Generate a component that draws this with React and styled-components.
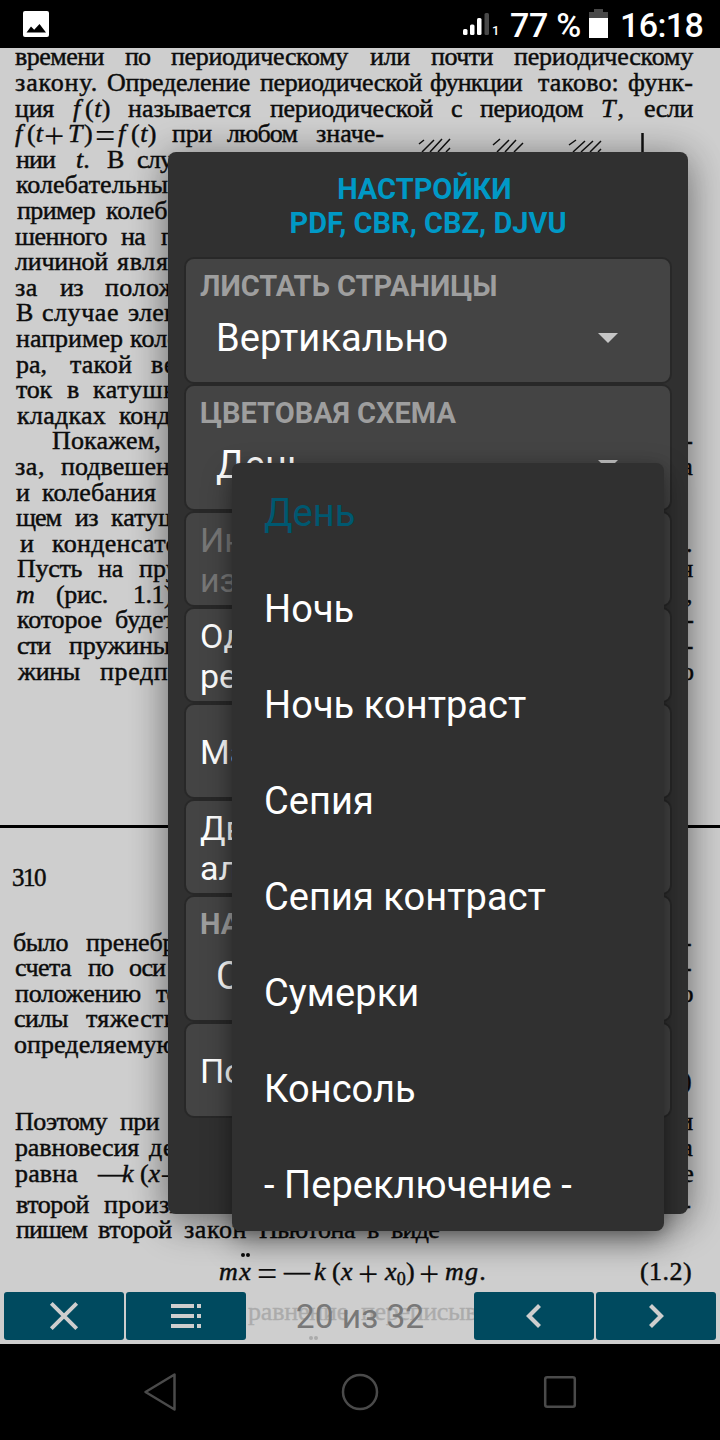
import React, { useLayoutEffect, useRef, useState } from "react";
import styled, { createGlobalStyle } from "styled-components";

const GlobalStyle = createGlobalStyle`
  * { box-sizing: border-box; }
  body { margin: 0; background: #000; font-family: Roboto, "Noto Sans", sans-serif; }
`;

const Screen = styled.div`
  position: relative;
  width: 720px;
  height: 1440px;
  overflow: hidden;
  display: flex;
  flex-direction: column;
  background: #000;
`;

const StatusBar = styled.header`
  flex: none;
  height: 48px;
  display: flex;
  align-items: center;
  padding: 0 16px 0 22px;
  background: #000;
  color: #fff;
`;

const StatusSpacer = styled.div`
  flex: 1;
`;

const StatusText = styled.span`
  font-weight: 500;
  font-size: 34px;
  line-height: 48px;
  letter-spacing: ${(p) => p.$spacing || "0"};
  padding: 2px 0 0 ${(p) => p.$indent || 0}px;
  width: ${(p) => p.$width}px;
  white-space: nowrap;
`;

const SimLabel = styled.span`
  width: 19px;
  padding: 14px 0 0 2px;
  font-size: 13px;
  font-weight: 500;
  line-height: 14px;
`;

const BatteryIcon = styled.svg`
  margin-right: 12px;
`;

/* ---------- scanned book ---------- */

const Viewer = styled.main`
  position: relative;
  flex: none;
  height: 1296px;
  overflow: hidden;
  background: #cecece;
  color: #0c0c0c;
  font-family: "Liberation Serif", serif;
  font-size: 26px;
`;

const Sheet = styled.section`
  height: ${(p) => p.$height}px;
  padding-top: ${(p) => p.$top || 0}px;
  margin-top: ${(p) => p.$shift || 0}px;
`;

const PageRule = styled.hr`
  height: 3px;
  margin: 0;
  border: 0;
  background: #000;
`;

const LineRow = styled.div`
  display: flex;
  height: 25.6px;
  line-height: 25.6px;
  margin-top: ${(p) => p.$before || 0}px;
`;

const WordBox = styled.span`
  flex: none;
  width: ${(p) => p.$width}px;
  margin-left: ${(p) => p.$gap}px;
  margin-top: ${(p) => p.$drop || 0}px;
  font-size: ${(p) => p.$size || 26}px;
  white-space: nowrap;
  -webkit-text-stroke: ${(p) => (p.$size > 30 ? 0 : 0.45)}px currentColor;
`;

const Sub = styled.sub`
  font-size: 18px;
  font-style: normal;
  line-height: 0;
  vertical-align: -5px;
`;

const Dotted = styled.span`
  position: relative;
  &::before {
    content: "";
    position: absolute;
    left: 2px;
    top: -4px;
    width: 4px;
    height: 4px;
    border-radius: 50%;
    background: currentColor;
    box-shadow: 5px 0 0 currentColor;
  }
`;

function Word({ text, width, gap, size, drop }) {
  const ref = useRef(null);
  const [spacing, setSpacing] = useState(0);
  useLayoutEffect(() => {
    const natural = ref.current.getBoundingClientRect().width;
    const count = ref.current.textContent.length;
    setSpacing((width - natural) / count);
  }, [width]);
  return (
    <WordBox $width={width} $gap={gap} $size={size} $drop={drop}>
      <span ref={ref} style={{ letterSpacing: `${spacing}px` }}>{text}</span>
    </WordBox>
  );
}

/* Every word is [text, left edge, right edge, font size, drop]. */
function Line({ words, before }) {
  let cursor = 0;
  return (
    <LineRow $before={before}>
      {words.map(([text, from, to, size, drop], i) => {
        const gap = from - cursor;
        cursor = to;
        return <Word key={i} text={text} width={to - from} gap={gap} size={size} drop={drop} />;
      })}
    </LineRow>
  );
}

const I = (s) => <i>{s}</i>;

const firstPage = [
  [["времени", 15, 104], ["по", 125, 150], ["периодическому", 171, 348], ["или", 370, 410], ["почти", 431, 493], ["периодическому", 514, 693]],
  [["закону.", 15, 98], ["Определение", 107, 250], ["периодической", 260, 422], ["функции", 430, 522], ["таково:", 538, 619], ["функ-", 628, 693]],
  [["ция", 15, 54], [I("f"), 73, 84], [<>({I("t")})</>, 85, 111], ["называется", 128, 251], ["периодической", 270, 433], ["с", 451, 462], ["периодом", 480, 583], [<>{I("T")},</>, 601, 626], ["если", 644, 693]],
  [[I("f"), 15, 27], [<>({I("t")}</>, 27, 43], ["+", 44, 65, 36, 3], [<>{I("T")})</>, 68, 94], ["=", 95, 116, 36, 3], [I("f"), 118, 130], [<>({I("t")})</>, 131, 157], ["при", 172, 212], ["любом", 227, 297], ["значе-", 316, 384]],
  [["нии", 16, 55], [<>{I("t")}.</>, 76, 90], ["В", 107, 123], ["случаях", 137, 219]],
  [["колебательных", 16, 181]],
  [["пример", 17, 95], ["колеба", 106, 179]],
  [["шенного", 15, 107], ["на", 121, 145], ["пру", 161, 198]],
  [["личиной", 15, 108], ["является", 117, 218]],
  [["за", 15, 38], ["из", 60, 83], ["положения", 105, 230]],
  [["В", 16, 32], ["случае", 42, 119], ["электри", 128, 216]],
  [["например", 16, 123], ["коле", 130, 179]],
  [["ра,", 16, 47], ["такой", 70, 132], ["вели", 151, 205]],
  [["ток", 16, 52], ["в", 67, 78], ["катушке", 93, 188]],
  [["кладках", 17, 106], ["конден", 119, 196]],
  [["Покажем,", 52, 161], ["гру-", 648, 693]],
  [["за,", 15, 45], ["подвешенн", 61, 184], ["на", 667, 693]],
  [["и", 16, 28], ["колебания", 42, 156], ["за", 168, 190]],
  [["щем", 16, 61], ["из", 75, 98], ["катушки", 111, 205]],
  [["и", 20, 31], ["конденсатора", 52, 204], [".", 686, 692]],
  [["Пусть", 17, 82], ["на", 98, 123], ["пружине", 139, 236], ["ся", 670, 693]],
  [[I("m"), 16, 34], ["(рис.", 56, 108], ["1.1),", 133, 178], [",", 686, 692]],
  [["которое", 17, 102], ["будет", 115, 175], ["но-", 660, 693]],
  [["сти", 17, 50], ["пружины", 69, 170], ["ру-", 660, 693]],
  [["жины", 18, 80], ["предпо", 100, 182], ["но", 668, 693]],
];

const secondPage = [
  { before: 37.2, words: [["310", 12, 45, 25]] },
  { before: 38.9, words: [["было", 13, 68], ["пренебре", 86, 187], ["от-", 658, 692]] },
  { words: [["счета", 15, 71], ["по", 88, 113], ["оси", 129, 165], ["от-", 658, 692]] },
  { words: [["положению", 15, 141], ["тела", 156, 200], ["по", 668, 692]] },
  { words: [["силы", 14, 68], ["тяжести", 86, 178]] },
  { words: [["определяемую", 14, 176]] },
  { before: 10, words: [["(1.1)", 641, 692]] },
  { before: 16.2, words: [["Поэтому", 15, 107], ["при", 120, 159], ["ми", 664, 692]] },
  { words: [["равновесия", 15, 139], ["дей", 149, 190], ["на", 668, 692]] },
  { words: [["равна", 15, 78], ["—", 98, 121], [I("k"), 122, 136], [<>({I("x")}</>, 140, 160], ["+", 160, 181, 36, 3], ["ие", 669, 693]] },
  { before: 5.4, words: [["второй", 16, 89], ["произв", 104, 182], ["за-", 658, 692]] },
  { before: -0.6, words: [["пишем", 16, 87], ["второй", 98, 172], ["закон", 184, 247], ["Ньютона", 259, 355], ["в", 367, 379], ["виде", 391, 439]] },
  {
    before: 16.4,
    words: [
      [<i>m<Dotted>x</Dotted></i>, 219, 252], ["=", 257, 278, 36, 3], ["—", 284, 308], [I("k"), 314, 328], [<>({I("x")}</>, 332, 353],
      ["+", 358, 379, 36, 3], [<><i>x</i><Sub>0</Sub></>, 385, 406], [")", 406, 415], ["+", 419, 440, 36, 3], [<>{I("mg")}.</>, 445, 487], ["(1.2)", 640, 692],
    ],
  },
  { before: 14.6, words: [["равнение", 248, 348], ["переписыва", 361, 488]] },
  { before: 17.4, words: [[<i>m<Dotted>x</Dotted></i>, 286, 320], [I("f"), 384, 394], ["(1.3)", 641, 692]] },
];

const Hatching = styled.svg`
  position: absolute;
  left: 408px;
  top: 84px;
`;

/* ---------- bottom controls ---------- */

const ControlBar = styled.div`
  position: absolute;
  left: 0;
  right: 0;
  bottom: 0;
  height: 54px;
  display: flex;
  gap: 2px;
  padding: 2px 4px 4px;
  background: rgba(206, 206, 206, 0.82);
  font-family: Roboto, sans-serif;
`;

const ControlButton = styled.button`
  width: 120px;
  height: 48px;
  padding: 0;
  border: 0;
  border-radius: 3px;
  display: flex;
  align-items: center;
  justify-content: center;
  background: #004a5f;
`;

const PageCounter = styled.div`
  flex: 1;
  text-align: center;
  font-size: 33.5px;
  line-height: 50px;
  color: #787878;
`;

const NavBar = styled.nav`
  flex: none;
  height: 96px;
  display: flex;
  align-items: center;
  justify-content: space-between;
  padding: 0 140px;
  background: #000;
`;

/* ---------- settings dialog ---------- */

const Dialog = styled.section`
  position: absolute;
  left: 168px;
  top: 152px;
  width: 520px;
  height: 1062px;
  padding: 20px 16px;
  border-radius: 8px;
  background: #303030;
  box-shadow: 0 12px 38px rgba(0, 0, 0, 0.3), 0 2px 36px rgba(0, 0, 0, 0.24);
`;

const DialogTitle = styled.h1`
  margin: 0 0 17px;
  text-align: center;
  font-size: 29px;
  line-height: 34px;
  font-weight: 700;
  color: #0099c6;
`;

const Card = styled.div`
  width: 488px;
  height: ${(p) => (p.$tall ? 127 : 96)}px;
  padding: ${(p) => (p.$tall ? 0 : 2)}px 16px 0;
  display: flex;
  flex-direction: column;
  justify-content: ${(p) => (p.$tall ? "flex-start" : "center")};
  border: 2px solid #282828;
  border-radius: 10px;
  background: #444;
  overflow: hidden;
`;

const CardTitle = styled.h2`
  margin: 10px 0 0 -2px;
  font-size: 29px;
  line-height: 34px;
  font-weight: 700;
  color: #9e9e9e;
`;

const CardSelect = styled.div`
  display: flex;
  justify-content: space-between;
  align-items: center;
  padding: 0 36px 0 14px;
  margin-top: 12px;
  font-size: 38px;
  line-height: 46px;
  letter-spacing: 0.1px;
  color: #fff;
`;

const CardText = styled.div`
  margin-left: -2px;
  font-size: 34px;
  line-height: 40px;
  color: ${(p) => (p.$disabled ? "#777" : "#fff")};
`;

const Menu = styled.ul`
  position: absolute;
  left: 232px;
  top: 463px;
  width: 432px;
  margin: 0;
  padding: 0;
  list-style: none;
  border-radius: 8px;
  background: #303030;
  box-shadow: 0 12px 30px rgba(0, 0, 0, 0.38), 0 2px 14px rgba(0, 0, 0, 0.16);
`;

const MenuItem = styled.li`
  height: 96px;
  padding: 2px 32px 0;
  font-size: 38px;
  line-height: 96px;
  letter-spacing: 0.05px;
  white-space: nowrap;
  color: ${(p) => (p.$selected ? "#005870" : "#fff")};
`;

const Caret = () => (
  <svg width="20" height="10" viewBox="0 0 20 10"><path d="M0 0h20L10 10z" fill="#c6c6c6" /></svg>
);

const schemes = ["День", "Ночь", "Ночь контраст", "Сепия", "Сепия контраст", "Сумерки", "Консоль", "- Переключение -"];

const cards = [
  { title: "ЛИСТАТЬ СТРАНИЦЫ", value: "Вертикально" },
  { title: "ЦВЕТОВАЯ СХЕМА", value: "День" },
  { lines: ["Инверсия", "изображений"], disabled: true },
  { lines: ["Одностраничный", "режим"] },
  { lines: ["Масштаб"] },
  { lines: ["Двойной", "альбом"] },
  { title: "НАЖАТИЕ", value: "Стандарт" },
  { lines: ["Поля"] },
];

export default function App() {
  return (
    <Screen>
      <GlobalStyle />
      <StatusBar>
        <svg width="28" height="28" viewBox="0 0 28 28">
          <rect x="1" y="1" width="26" height="26" rx="2" fill="#fff" />
          <path d="M4.500 22.500 9 16.500l3.200 3.300L17.500 14l6.500 8.500z" fill="#000" />
        </svg>
        <StatusSpacer />
        <svg width="27" height="24" viewBox="0 0 27 24">
          <rect x="0" y="17" width="4.500" height="6" rx="1.500" fill="#fff" />
          <rect x="7" y="12.500" width="4.500" height="10.500" rx="1.500" fill="#fff" />
          <rect x="14" y="6" width="4.500" height="17" rx="1.500" fill="#fff" />
          <rect x="21.500" y="1" width="4.500" height="22" rx="1.500" fill="#484848" />
        </svg>
        <SimLabel>1</SimLabel>
        <StatusText $width={80} $indent={1} $spacing="-0.3px">77 %</StatusText>
        <BatteryIcon width="19" height="30" viewBox="0 0 19 30">
          <path d="M0 3h5V0h9v3h5v7H0z" fill="#484848" />
          <path d="M0 9h19v20H0z" fill="#fff" />
        </BatteryIcon>
        <StatusText $width={84} $spacing="-0.6px">16:18</StatusText>
      </StatusBar>

      <Viewer>
        <Sheet $shift={-3.6} $height={780.6}>
          {firstPage.map((words, i) => <Line key={i} words={words} />)}
        </Sheet>
        <PageRule />
        <Sheet $height={540}>
          {secondPage.map((l, i) => <Line key={i} words={l.words} before={l.before} />)}
        </Sheet>
        <Hatching width="240" height="24" viewBox="0 0 240 24" fill="none" stroke="#111" strokeWidth="1.5">
          <path d="M11 12l5-4M14 20 26 8M22 20 34 7M30 20 42 7M38 20l4-4M85 13l7-6M89 20 101 8M97 20l11-12M106 20l9-9M161 13l7-5M165 20l12-11M173 20l12-11M182 20l11-11M190 20l3-3" />
          <path d="M234.500 1v19" strokeWidth="2.5" />
        </Hatching>
        <ControlBar>
          <ControlButton aria-label="Закрыть">
            <svg width="30" height="30" viewBox="0 0 30 30"><path d="M2.300 2.300l25.400 25.400M27.700 2.300l-25.400 25.400" stroke="#cecece" strokeWidth="3.900" /></svg>
          </ControlButton>
          <ControlButton aria-label="Меню">
            <svg width="30" height="24" viewBox="0 0 30 24"><path d="M0 2h23M26 2h4M0 12h23M26 12h4M0 22h23M26 22h4" stroke="#cecece" strokeWidth="4" /></svg>
          </ControlButton>
          <PageCounter>20 из 32</PageCounter>
          <ControlButton aria-label="Назад">
            <svg width="16" height="24" viewBox="0 0 16 24"><path d="M13.500 1.500 3 12l10.500 10.500" fill="none" stroke="#cecece" strokeWidth="4.200" /></svg>
          </ControlButton>
          <ControlButton aria-label="Вперёд">
            <svg width="16" height="24" viewBox="0 0 16 24"><path d="M2.500 1.500 13 12 2.500 22.500" fill="none" stroke="#cecece" strokeWidth="4.200" /></svg>
          </ControlButton>
        </ControlBar>
      </Viewer>

      <NavBar>
        <svg width="40" height="40" viewBox="0 0 40 40" fill="none" stroke="#4a4a4a" strokeWidth="2.500" strokeLinejoin="round"><path d="M5.500 20 34.500 2.500v35z" /></svg>
        <svg width="40" height="40" viewBox="0 0 40 40" fill="none" stroke="#4a4a4a" strokeWidth="2.500"><circle cx="20" cy="20" r="17" /></svg>
        <svg width="40" height="40" viewBox="0 0 40 40" fill="none" stroke="#4a4a4a" strokeWidth="2.500"><rect x="5.200" y="5.200" width="29.600" height="29.600" rx="2" /></svg>
      </NavBar>

      <Dialog>
        <DialogTitle>НАСТРОЙКИ&nbsp;<br />PDF, CBR, CBZ, DJVU</DialogTitle>
        {cards.map((c, i) => (
          <Card key={i} $tall={!!c.title}>
            {c.title ? (
              <>
                <CardTitle>{c.title}</CardTitle>
                <CardSelect>{c.value}<Caret /></CardSelect>
              </>
            ) : (
              c.lines.map((t) => <CardText key={t} $disabled={c.disabled}>{t}</CardText>)
            )}
          </Card>
        ))}
      </Dialog>

      <Menu>
        {schemes.map((s, i) => <MenuItem key={s} $selected={i === 0}>{s}</MenuItem>)}
      </Menu>
    </Screen>
  );
}
